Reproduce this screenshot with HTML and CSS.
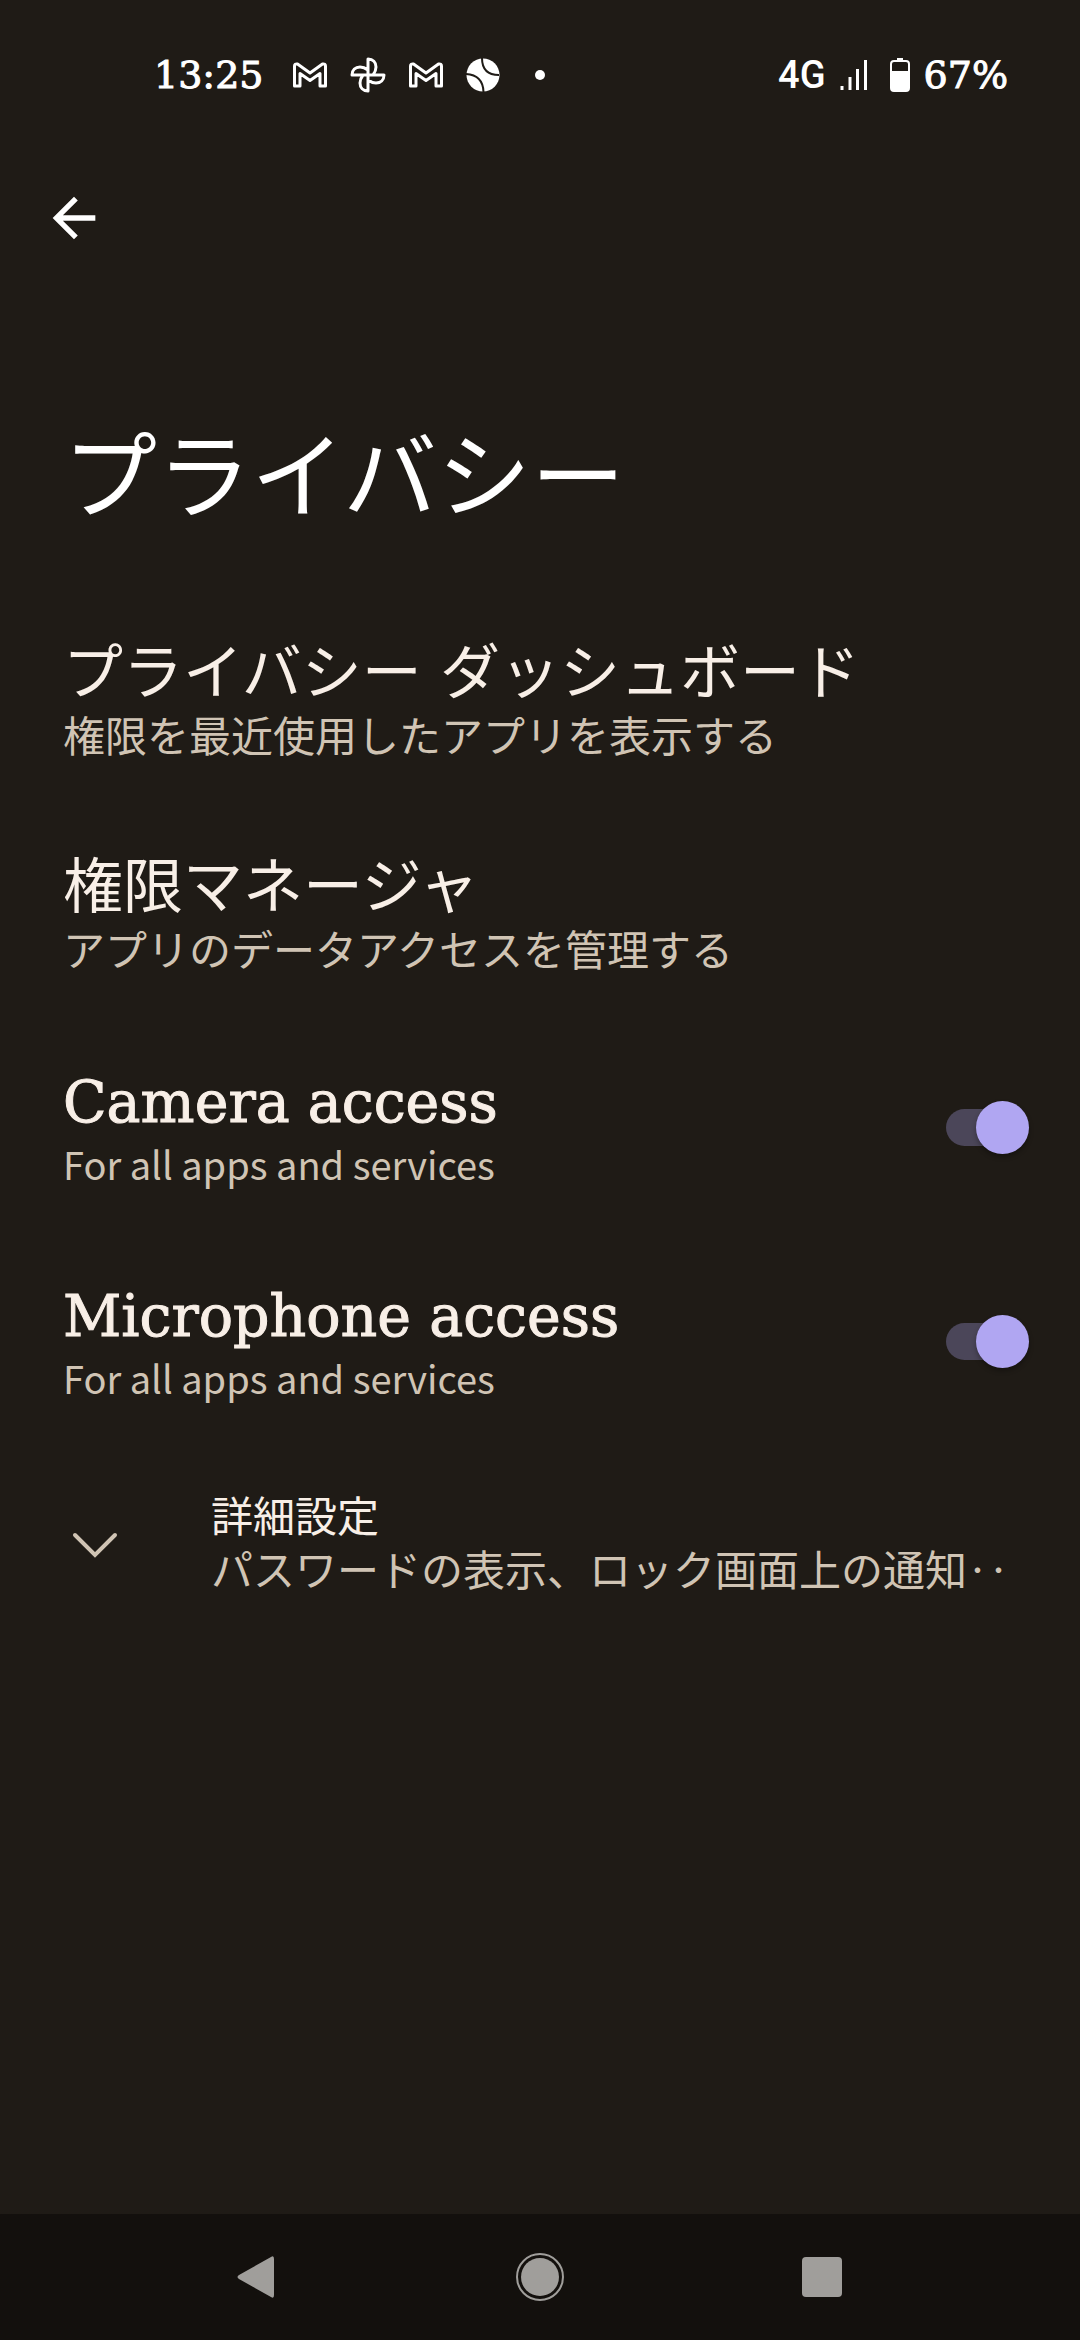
FILE: index.html
```html
<!DOCTYPE html>
<html lang="ja">
<head>
  <meta charset="UTF-8" />
  <meta name="viewport" content="width=device-width, initial-scale=1.0"/>
  <title>プライバシー</title>
  <link rel="stylesheet" href="styles.css">
</head>
<body>
  <div class="status-bar">
    <div class="status-left">
      <span class="clock">13:25</span>
      <svg class="mail" width="34" height="26" viewBox="0 0 34 26">
        <path d="M1.500 24V4Q1.500 1.500 4.500 2L17 11 29.500 2Q32.500 1.500 32.500 4V24H27V11.500L17 18.500 7 11.500V24Z"/>
      </svg>
      <svg class="photos" width="36" height="36" viewBox="0 0 36 36">
        <path d="M18 18V2C23 2 26 5.500 26 10Q26 14 23 18M18 18H34C34 23 30.500 26 26 26Q22 26 18 23M18 18V34C13 34 10 30.500 10 26Q10 22 13 18M18 18H2C2 13 5.500 10 10 10Q14 10 18 13"/>
      </svg>
      <svg class="mail" width="34" height="26" viewBox="0 0 34 26">
        <path d="M1.500 24V4Q1.500 1.500 4.500 2L17 11 29.500 2Q32.500 1.500 32.500 4V24H27V11.500L17 18.500 7 11.500V24Z"/>
      </svg>
      <svg class="ball" width="34" height="34" viewBox="0 0 34 34">
        <circle cx="17" cy="17" r="16.500"/>
        <path d="M16 0Q16 17 33 17M0 16Q17 17 17.500 34"/>
      </svg>
      <span class="more-dot"></span>
    </div>
    <div class="status-right">
      <span class="network">4G</span>
      <svg class="signal" width="28" height="30" viewBox="0 0 28 30">
        <path d="M2 26V30M10 17V30M17.500 9V30M25.500 0V30"/>
      </svg>
      <svg class="battery" width="20" height="34" viewBox="0 0 20 34">
        <path d="M7 0H13V2H16Q20 2 20 6V30Q20 34 16 34H4Q0 34 0 30V6Q0 2 4 2H7ZM4 4Q2 4 2 6V13H18V6Q18 4 16 4Z" fill-rule="evenodd"/>
      </svg>
      <span class="clock">67%</span>
    </div>
  </div>

  <header class="app-bar">
    <button class="back" aria-label="戻る">
      <svg width="64" height="64" viewBox="0 0 24 24">
        <path d="M20 11H7.830l5.590-5.590L12 4l-8 8 8 8 1.410-1.410L7.830 13H20z"/>
      </svg>
    </button>
    <h1>プライバシー</h1>
  </header>

  <main class="settings">
    <a class="item" href="#dashboard">
      <span class="item-text">
        <span class="item-title">プライバシー<span class="latin"> </span>ダッシュボード</span>
        <span class="item-sub">権限を最近使用したアプリを表示する</span>
      </span>
    </a>
    <a class="item" href="#permissions">
      <span class="item-text">
        <span class="item-title">権限マネージャ</span>
        <span class="item-sub">アプリのデータアクセスを管理する</span>
      </span>
    </a>
    <label class="item" for="camera">
      <span class="item-text">
        <span class="item-title"><span class="latin">Camera access</span></span>
        <span class="item-sub"><span class="latin-sub">For all apps and services</span></span>
      </span>
      <input class="switch" type="checkbox" id="camera" checked />
    </label>
    <label class="item" for="microphone">
      <span class="item-text">
        <span class="item-title"><span class="latin">Microphone access</span></span>
        <span class="item-sub"><span class="latin-sub">For all apps and services</span></span>
      </span>
      <input class="switch" type="checkbox" id="microphone" checked />
    </label>
    <button class="advanced">
      <svg class="chevron" width="64" height="64" viewBox="0 0 64 64">
        <path d="M12 26L32 46 52 26"/>
      </svg>
      <span class="advanced-text">
        <span class="advanced-title">詳細設定</span>
        <span class="advanced-sub">パスワードの表示、ロック画面上の通知‥</span>
      </span>
    </button>
  </main>

  <nav class="nav-bar">
    <button aria-label="戻る">
      <svg width="48" height="48" viewBox="0 0 48 48">
        <path d="M40 6V42Q40 46 37 44L5 26Q2 24 5 22L37 4Q40 2 40 6Z"/>
      </svg>
    </button>
    <button aria-label="ホーム">
      <svg width="48" height="48" viewBox="0 0 48 48">
        <circle cx="24" cy="24" r="19"/>
        <circle class="ring" cx="24" cy="24" r="23"/>
      </svg>
    </button>
    <button aria-label="最近">
      <svg width="48" height="48" viewBox="0 0 48 48">
        <rect x="4" y="4" width="40" height="40" rx="4"/>
      </svg>
    </button>
  </nav>
</body>
</html>
```

FILE: styles.css
```css
* {
  box-sizing: border-box;
}
body {
  margin: 0;
  min-height: 100vh;
  display: flex;
  flex-direction: column;
  background: #1f1b16;
  color: #f8efe7;
  font-family: "Noto Sans CJK JP", sans-serif;
}
button {
  padding: 0;
  border: none;
  background: none;
  color: inherit;
  font: inherit;
  cursor: pointer;
}
svg {
  display: block;
  flex: none;
}
.status-bar {
  display: flex;
  justify-content: space-between;
  align-items: center;
  height: 150px;
  padding: 0 72px 0 154px;
  color: #fff;
}
.status-left {
  display: flex;
  align-items: center;
  gap: 23px;
}
.status-right {
  display: flex;
  align-items: center;
  gap: 14px;
}
.clock {
  font-family: "DejaVu Serif", serif;
  font-size: 38px;
  line-height: 48px;
  -webkit-text-stroke: 1px;
}
.status-left .clock {
  margin-right: 6px;
}
.network {
  font-family: Roboto, sans-serif;
  font-size: 38px;
  font-weight: 500;
  line-height: 48px;
}
.mail path, .photos path {
  fill: none;
  stroke: #fff;
  stroke-width: 3;
  stroke-linejoin: round;
}
.ball circle {
  fill: #fff;
}
.ball path {
  fill: none;
  stroke: #1f1b16;
  stroke-width: 2;
}
.more-dot {
  width: 10px;
  height: 10px;
  margin-left: 12px;
  border-radius: 50%;
  background: #fff;
}
.signal path {
  stroke: #fff;
  stroke-width: 3;
}
.battery {
  margin-left: 8px;
}
.battery path {
  fill: #fff;
}
.app-bar {
  padding: 36px 42px 0;
}
.back {
  display: block;
}
.back path {
  fill: #fff;
}
h1 {
  margin: 152px 0 0;
  padding: 0 21px;
  color: #fff;
  font-size: 94px;
  font-weight: 400;
  line-height: 136px;
}
.settings {
  flex: 1;
  padding-top: 52px;
}
.item {
  display: flex;
  justify-content: space-between;
  align-items: center;
  padding: 43px 51px 39px 63px;
  color: inherit;
  text-decoration: none;
  cursor: pointer;
}
.item-title, .item-sub, .advanced-title, .advanced-sub {
  display: block;
}
.item-title {
  font-size: 60px;
  line-height: 70px;
}
.latin {
  font-family: "DejaVu Serif", serif;
  font-size: 57px;
  line-height: 1;
  -webkit-text-stroke: 1px;
}
.item-sub {
  color: #d0c4b4;
  font-size: 42px;
  line-height: 62px;
}
.latin-sub {
  font-size: 38px;
  line-height: 1;
}
.switch {
  appearance: none;
  flex: none;
  display: flex;
  align-items: center;
  position: relative;
  width: 83px;
  height: 53px;
  margin: 0;
  cursor: pointer;
}
.switch::before {
  content: "";
  width: 74px;
  height: 37px;
  border-radius: 19px;
  background: #4b4659;
}
.switch::after {
  content: "";
  position: absolute;
  top: 0;
  left: 0;
  width: 53px;
  height: 53px;
  border-radius: 50%;
  background: #cac4d0;
  box-shadow: 0 3px 5px rgba(0, 0, 0, 0.3);
}
.switch:checked::after {
  left: 30px;
  background: #b0a6f2;
}
.advanced {
  display: flex;
  align-items: center;
  gap: 84px;
  width: 100%;
  padding: 41px 63px;
  text-align: left;
}
.chevron path {
  fill: none;
  stroke: #d0c4b4;
  stroke-width: 4;
  stroke-linecap: round;
}
.advanced-text {
  font-size: 42px;
  line-height: 54px;
  white-space: nowrap;
}
.advanced-sub {
  color: #d0c4b4;
}
.nav-bar {
  display: grid;
  grid-template-columns: repeat(3, 1fr);
  align-items: center;
  height: 126px;
  padding: 0 117px;
  background: #13100d;
}
.nav-bar button {
  display: flex;
  justify-content: center;
}
.nav-bar svg {
  fill: #a09e9b;
}
.nav-bar .ring {
  fill: none;
  stroke: #a09e9b;
  stroke-width: 2;
}
```
